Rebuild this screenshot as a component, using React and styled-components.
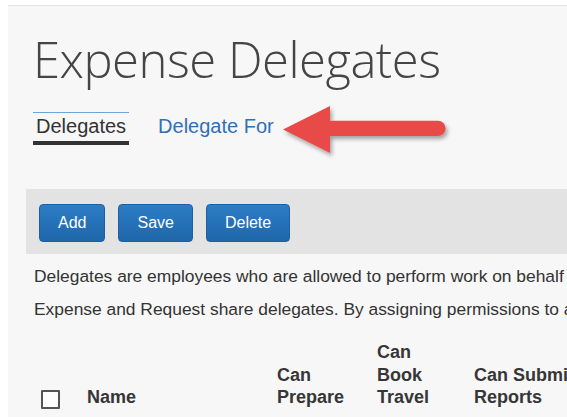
import React from 'react'
import styled, { createGlobalStyle } from 'styled-components'

const GlobalStyle = createGlobalStyle`
  html, body {
    margin: 0;
    padding: 0;
    background: #fff;
    overflow: hidden;
  }
  body {
    font-family: "Liberation Sans", Arial, sans-serif;
    color: #333;
  }
`

const Page = styled.div`
  padding: 5px 0 0 8px;
  overflow: hidden;
`

const Panel = styled.main`
  background: #f7f7f7;
  border-top: 1px solid #e4e4e4;
  padding: 0 0 40px 18px;
`

const Title = styled.h1`
  margin: 28px 0 0 7px;
  font-family: "Open Sans", sans-serif;
  font-weight: 300;
  font-size: 49px;
  line-height: 50px;
  color: #454545;
  letter-spacing: -0.5px;
  white-space: nowrap;
`

const TabBar = styled.nav`
  position: relative;
  display: flex;
  align-items: baseline;
  gap: 26px;
  margin: 28px 0 0 7px;
`

const Tab = styled.a`
  display: block;
  padding: 2px 3px 4px;
  font-size: 20px;
  line-height: 22px;
  text-decoration: none;
  cursor: pointer;
  color: ${p => (p.$active ? '#333' : '#2f70bb')};
  border-top: 1px solid ${p => (p.$active ? '#6fa3d6' : 'transparent')};
  border-bottom: 4px solid ${p => (p.$active ? '#333' : 'transparent')};
`

const Pointer = styled.svg`
  position: absolute;
  left: 245px;
  top: -12px;
  overflow: visible;
`

const Toolbar = styled.div`
  display: flex;
  gap: 13px;
  margin-top: 44px;
  height: 65px;
  box-sizing: border-box;
  padding: 15px 0 0 13px;
  background: #e2e3e2;
`

const Button = styled.button`
  height: 38px;
  padding: 0 18px;
  border: 1px solid #1d5f9f;
  border-radius: 4px;
  background: linear-gradient(#2c7dc6, #1f66aa);
  color: #fff;
  font-family: "Liberation Sans", Arial, sans-serif;
  font-size: 16px;
  cursor: pointer;
`

const Notes = styled.div`
  margin-top: 6px;
`

const Note = styled.p`
  margin: 0 0 0 8px;
  font-size: 17.4px;
  line-height: 33px;
  white-space: nowrap;
  color: #333;
`

const HeaderRow = styled.div`
  display: grid;
  grid-template-columns: 46px 190px 100px 97px 140px;
  align-items: end;
  margin: 15px 0 0 15px;
`

const HeadCell = styled.div`
  font-size: 18px;
  font-weight: bold;
  line-height: 22.5px;
  color: #363636;
  white-space: nowrap;
`

const Check = styled.span`
  display: block;
  width: 19px;
  height: 19px;
  box-sizing: border-box;
  border: 2px solid #555;
  border-radius: 1px;
  background: #fff;
`

const Arrow = () => (
  <Pointer width="175" height="62" viewBox="0 0 175 62">
    <defs>
      <filter id="arrowShadow" x="-10%" y="-20%" width="130%" height="160%">
        <feDropShadow dx="2" dy="3" stdDeviation="2" floodColor="#000" floodOpacity="0.35" />
      </filter>
    </defs>
    <path
      d="M5 29.5 L52 6 L52 20.7 L160 20.7 A7.6 7.6 0 0 1 160 36 L52 36 L52 53 Z"
      fill="#e84c47"
      filter="url(#arrowShadow)"
    />
  </Pointer>
)

const App = () => (
  <Page>
    <GlobalStyle />
    <Panel>
      <Title>Expense Delegates</Title>
      <TabBar>
        <Tab $active>Delegates</Tab>
        <Tab>Delegate For</Tab>
        <Arrow />
      </TabBar>
      <Toolbar>
        <Button>Add</Button>
        <Button>Save</Button>
        <Button>Delete</Button>
      </Toolbar>
      <Notes>
        <Note>Delegates are employees who are allowed to perform work on behalf of another user.</Note>
        <Note>Expense and Request share delegates. By assigning permissions to a delegate, you allow them to act for you.</Note>
      </Notes>
      <HeaderRow>
        <Check />
        <HeadCell>Name</HeadCell>
        <HeadCell>Can<br />Prepare</HeadCell>
        <HeadCell>Can<br />Book<br />Travel</HeadCell>
        <HeadCell>Can Submit<br />Reports</HeadCell>
      </HeaderRow>
    </Panel>
  </Page>
)

export default App
